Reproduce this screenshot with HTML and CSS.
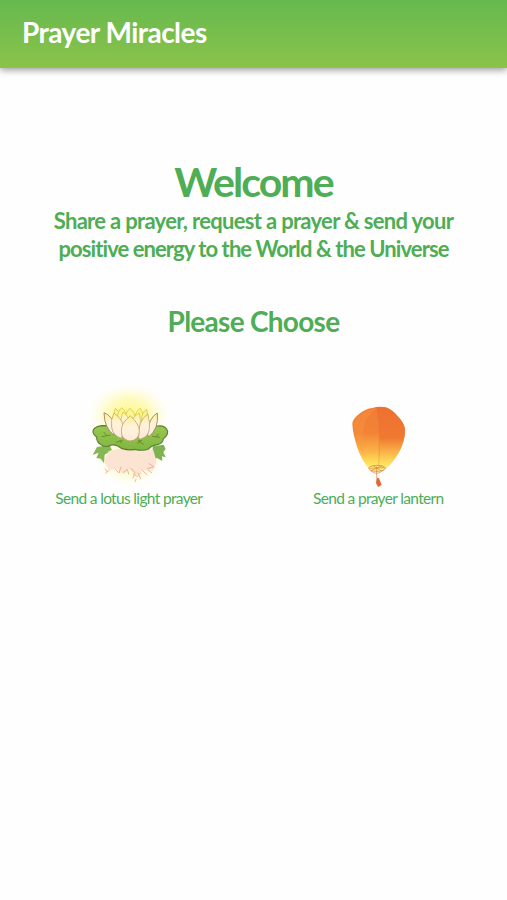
FILE: index.html
```html
<!DOCTYPE html>
<html lang="en">

<head>
    <meta charset="UTF-8" />
    <meta name="viewport" content="width=device-width" />
    <title>Prayer Miracles</title>
    <link rel="stylesheet" href="styles.css">
</head>

<body>
    <header class="toolbar">Prayer Miracles</header>

    <main>
        <h1>Welcome</h1>
        <p class="intro">
            <span class="line-one">Share a prayer, request a prayer &amp; send your</span><br>
            <span class="line-two">positive energy to the World &amp; the Universe</span>
        </p>
        <h2>Please Choose</h2>

        <div class="choices">
            <a class="choice lotus">
                <svg viewBox="0 0 300 345" width="100" height="115">
                    <defs>
                        <radialGradient id="glow">
                            <stop offset="0" stop-color="#fff58a" />
                            <stop offset="0.5" stop-color="#fff9ab" stop-opacity="0.8" />
                            <stop offset="1" stop-color="#fffde8" stop-opacity="0" />
                        </radialGradient>
                        <linearGradient id="petal" x1="0" y1="0" x2="0" y2="1">
                            <stop offset="0" stop-color="#fbf28c" />
                            <stop offset="0.4" stop-color="#fff3d8" />
                            <stop offset="1" stop-color="#fdeadf" />
                        </linearGradient>
                        <linearGradient id="leaf" x1="0" y1="0" x2="0" y2="1">
                            <stop offset="0" stop-color="#98c850" />
                            <stop offset="1" stop-color="#7fb640" />
                        </linearGradient>
                    </defs>
                    <ellipse cx="148" cy="102" rx="128" ry="98" fill="url(#glow)" />
                    <ellipse cx="151" cy="235" rx="108" ry="88" fill="url(#glow)" opacity="0.65" />
                    <!-- reflection -->
                    <path d="M51 198L88 192L96 207L74 221L72 247L62 233L49 231L56 215L38 222Z" fill="#87b654" />
                    <path d="M218 196L251 191L257 204L250 214L257 229L246 226L247 240L231 231L219 234Z" fill="#80b251" />
                    <path d="M86 210Q150 193 220 208L230 243L219 269L187 267L169 284L149 264L131 280L114 264L88 266L72 242Z" fill="#fce4d2" />
                    <g fill="none" stroke="#f0b09c" stroke-width="3" stroke-linecap="round">
                        <path d="M76 264l5 8m26-6l10 10 6-18m7 16l12-9 4 14m7-17l12 13-6 16m15-15l8 18m5-26l14 13m2-19l18-4m-17 9l11 8M207 248l13 8" />
                        <path d="M160 279l12 8 10-12M77 276l11-8M165 302l3-7" stroke="#f1bba0" />
                    </g>
                    <!-- leaf pad -->
                    <path d="M64 134Q39 139 39 151Q39 161 50 168Q49 181 61 190Q76 202 94 192Q110 189 124 202Q147 209 164 205Q190 211 206 204Q215 193 232 191Q249 187 250 173Q263 165 263 151Q257 132 232 135Z" fill="url(#leaf)" stroke="#5f7f35" stroke-width="3.5" />
                    <path d="M65 167l27-5m-13 0l-8-9m38 31l19-6m46 2l17 10m-17-10l12-2m30-12l24 3m-13-2l10-8M119 178l7 9M172 189l9-9" fill="none" stroke="#64822e" stroke-width="2.5" />
                    <!-- back petals -->
                    <g fill="#fbf497" stroke="#e1d539" stroke-width="3">
                        <path d="M103 122Q99 97 106 82Q119 91 126 111Z" />
                        <path d="M111 117Q112 91 125 80Q140 92 142 118Z" />
                        <path d="M136 111Q139 90 150 82Q163 92 168 112Z" />
                        <path d="M160 116Q169 89 181 82Q190 94 190 119Z" />
                        <path d="M183 119Q186 93 200 85Q206 101 201 127Z" />
                    </g>
                    <g fill="url(#petal)" stroke="#c4a67a" stroke-width="2.5">
                        <path d="M101 162Q73 141 72 95Q96 104 108 139Z" stroke="#9a7763" />
                        <path d="M203 162Q204 111 232 96Q237 143 207 167Z" stroke="#9a7763" />
                        <path d="M125 146Q120 112 129 93Q149 106 151 134Z" stroke="#d4ca55" />
                        <path d="M151 137Q157 105 178 96Q186 123 177 151Z" stroke="#d4ca55" />
                        <path d="M125 172Q98 164 95 139Q91 117 102 96Q124 111 131 136Z" />
                        <path d="M176 171Q173 119 203 99Q211 124 208 145Q205 167 182 174Z" />
                        <path d="M149 180Q124 175 124 151Q123 125 151 105Q178 128 178 151Q177 178 149 180Z" stroke="#cda266" />
                    </g>
                </svg>
                <span>Send a lotus light prayer</span>
            </a>
            <a class="choice lantern">
                <svg viewBox="0 0 270 345" width="90" height="115">
                    <defs>
                        <linearGradient id="paper" x1="0" y1="0" x2="0" y2="1">
                            <stop offset="0" stop-color="#f27c35" />
                            <stop offset="0.4" stop-color="#f38337" />
                            <stop offset="0.68" stop-color="#fbb247" />
                            <stop offset="0.87" stop-color="#ffe45d" />
                            <stop offset="1" stop-color="#fff0a2" />
                        </linearGradient>
                        <linearGradient id="side" x1="0" y1="0" x2="0" y2="1">
                            <stop offset="0" stop-color="#ee7030" />
                            <stop offset="0.5" stop-color="#f07931" />
                            <stop offset="0.77" stop-color="#fbc04e" stop-opacity="0.7" />
                            <stop offset="1" stop-color="#ffea70" stop-opacity="0" />
                        </linearGradient>
                    </defs>
                    <g transform="translate(0 45)">
                        <path d="M52 85Q51 70 75 52Q92 38 112 36Q134 29 156 35Q176 44 187 60Q205 77 210 98Q211 139 187 177Q170 205 151 219Q142 227 125 228Q108 229 101 218Q79 190 67 155Q54 116 52 85Z" fill="url(#paper)" />
                        <path d="M124 34Q141 31 156 35Q176 44 187 60Q205 77 210 98Q211 139 187 177Q170 205 151 219L132 221Q139 110 124 34Z" fill="url(#side)" />
                        <path d="M54 82Q76 48 125 34L91 73Q76 133 86 178Q65 135 54 82Z" fill="#fa9b42" opacity="0.35" />
                        <path d="M127 38Q137 109 131 211" fill="none" stroke="#df762d" stroke-width="2" opacity="0.6" />
                        <g fill="none" stroke="#d4823a" stroke-width="2">
                            <ellipse cx="126" cy="217" rx="25" ry="9" />
                            <path d="M103 217L149 215M109 224L142 209M114 209L139 225M125 212V246M107 224Q126 241 145 222" />
                        </g>
                        <path d="M125 245L132 247L140 267L129 273L123 261Z" fill="#e46731" />
                    </g>
                </svg>
                <span>Send a prayer lantern</span>
            </a>
        </div>
    </main>
</body>

</html>
```
FILE: styles.css
```css
body {
    margin: 0;
    font-family: Lato, sans-serif;
    background: #fefefe;
    color: #4ead55;
    text-align: center;
}

.toolbar {
    height: 68px;
    box-sizing: border-box;
    padding-left: 22px;
    background: linear-gradient(#66b94f, #8bc34a);
    box-shadow: 0 2px 7px rgba(0, 0, 0, 0.4);
    color: white;
    font-size: 28px;
    font-weight: bold;
    line-height: 64px;
    letter-spacing: -0.53px;
    text-align: left;
}

main {
    padding-top: 92px;
}

h1 {
    margin: 0;
    font-size: 41px;
    line-height: 44px;
    letter-spacing: -1.9px;
}

.intro {
    margin: 3px 0 0;
    font-size: 22px;
    font-weight: bold;
    line-height: 28px;
    white-space: nowrap;
}

.line-one {
    letter-spacing: -0.68px;
}

.line-two {
    letter-spacing: -0.92px;
}

h2 {
    margin: 40px 0 0;
    font-size: 28px;
    line-height: 36px;
    letter-spacing: -0.72px;
}

.choices {
    display: grid;
    grid-template-columns: 1fr 1fr;
    margin-top: 42px;
}

.choice {
    display: flex;
    flex-direction: column;
    align-items: center;
    font-size: 15.5px;
    line-height: 20px;
    letter-spacing: -0.66px;
    white-space: nowrap;
}

.choice svg {
    margin-bottom: -8px;
}

.lotus {
    padding-left: 4px;
}

.lotus svg {
    margin-left: 2px;
}

.lantern {
    padding-right: 4px;
}

.lantern svg {
    margin-left: 4px;
}
```
